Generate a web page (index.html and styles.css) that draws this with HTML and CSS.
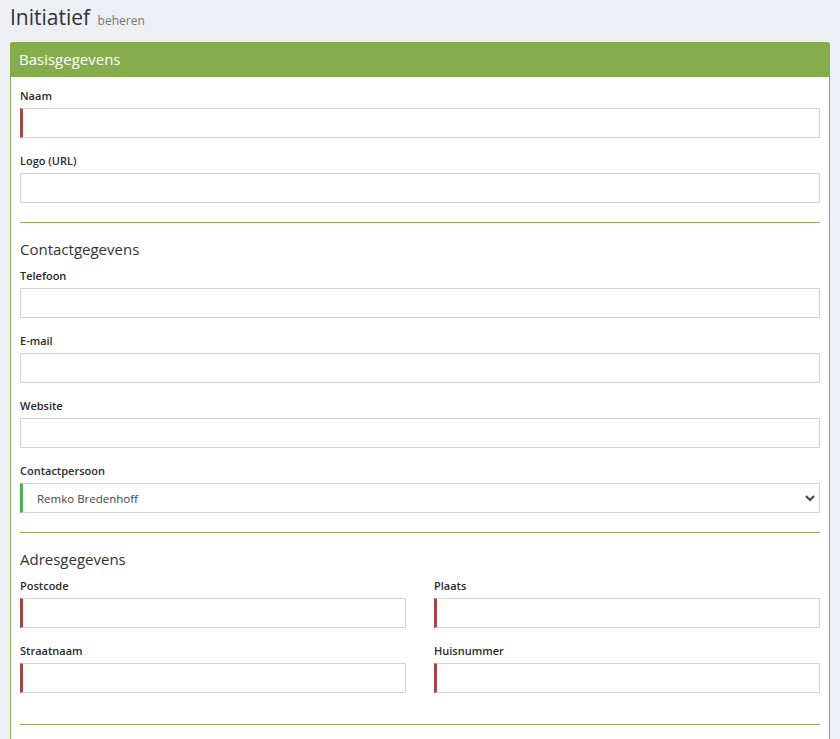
FILE: index.html
```html
<!DOCTYPE html>
<html lang="nl">
<head>
    <meta charset="UTF-8">
    <meta name="viewport" content="width=device-width, initial-scale=1.0">
    <title>Initiatief beheren</title>
    <link rel="stylesheet" href="styles.css">
</head>
<body>
    <h1 class="page-title">Initiatief <small>beheren</small></h1>

    <div class="panel">
        <div class="panel-heading">Basisgegevens</div>
        <div class="panel-body">
            <form id="initiatiefForm">
                <div class="form-group">
                    <label for="naam">Naam</label>
                    <input type="text" id="naam" class="required">
                </div>
                <div class="form-group">
                    <label for="logo">Logo (URL)</label>
                    <input type="text" id="logo">
                </div>

                <hr>
                <h4 class="section-title">Contactgegevens</h4>

                <div class="form-group">
                    <label for="telefoon">Telefoon</label>
                    <input type="text" id="telefoon">
                </div>
                <div class="form-group">
                    <label for="email">E-mail</label>
                    <input type="text" id="email">
                </div>
                <div class="form-group">
                    <label for="website">Website</label>
                    <input type="text" id="website">
                </div>
                <div class="form-group">
                    <label for="contactpersoon">Contactpersoon</label>
                    <div class="select-wrap">
                        <select id="contactpersoon" class="valid">
                            <option>Remko Bredenhoff</option>
                        </select>
                        <svg class="chevron" width="10" height="8" viewBox="0 0 10 8">
                            <path d="M1 2 L5 6 L9 2" fill="none" stroke="#444" stroke-width="2"/>
                        </svg>
                    </div>
                </div>

                <hr>
                <h4 class="section-title">Adresgegevens</h4>

                <div class="row">
                    <div class="form-group">
                        <label for="postcode">Postcode</label>
                        <input type="text" id="postcode" class="required">
                    </div>
                    <div class="form-group">
                        <label for="plaats">Plaats</label>
                        <input type="text" id="plaats" class="required">
                    </div>
                    <div class="form-group">
                        <label for="straatnaam">Straatnaam</label>
                        <input type="text" id="straatnaam" class="required">
                    </div>
                    <div class="form-group">
                        <label for="huisnummer">Huisnummer</label>
                        <input type="text" id="huisnummer" class="required">
                    </div>
                </div>

                <hr>
            </form>
        </div>
    </div>
</body>
</html>
```

FILE: styles.css
```css
body {
    margin: 0;
    padding: 0 10px;
    font-family: "Open Sans", "Noto Sans", sans-serif;
    color: #333;
    background-color: #eceff4;
}
.page-title {
    margin: 0;
    padding: 3px 0 7px;
    font-size: 21px;
    font-weight: normal;
    line-height: 28px;
    color: #333;
}
.page-title small {
    font-size: 12px;
    color: #777;
    margin-left: 2px;
}
.panel {
    background-color: #fff;
    border: 1px solid #86ad4c;
    border-radius: 3px 3px 0 0;
}
.panel-heading {
    background-color: #86ad4c;
    color: #fff;
    font-size: 15px;
    height: 35px;
    line-height: 35px;
    padding: 0 9px;
    margin: -1px -1px 0;
    border-radius: 3px 3px 0 0;
}
.panel-body {
    padding: 11px 9px 60px;
}
.form-group {
    margin-bottom: 15px;
}
label {
    display: block;
    font-size: 11px;
    font-weight: 600;
    line-height: 15px;
    margin-bottom: 5px;
    color: #2b2b2b;
}
input[type="text"],
select {
    display: block;
    box-sizing: border-box;
    width: 100%;
    height: 30px;
    margin: 0;
    padding: 4px 12px;
    border: 1px solid #d3d3d3;
    background-color: #fff;
    font-family: inherit;
    font-size: 11.5px;
    color: #444;
    border-radius: 0;
}
.required {
    border-left: 3px solid #a94442 !important;
}
.valid {
    border-left: 3px solid #4caf50 !important;
}
.select-wrap {
    position: relative;
}
select {
    appearance: none;
    -webkit-appearance: none;
    padding-left: 14px;
}
.chevron {
    position: absolute;
    top: 11px;
    right: 5px;
}
hr {
    border: 0;
    border-top: 1px solid #8cb05a;
    margin: 19px 0 0;
}
.section-title {
    font-size: 15px;
    font-weight: normal;
    line-height: 18px;
    margin: 17px 0 10px;
}
.row {
    display: grid;
    grid-template-columns: 1fr 1fr;
    column-gap: 28px;
}
.row + hr {
    margin-top: 16px;
}
```
